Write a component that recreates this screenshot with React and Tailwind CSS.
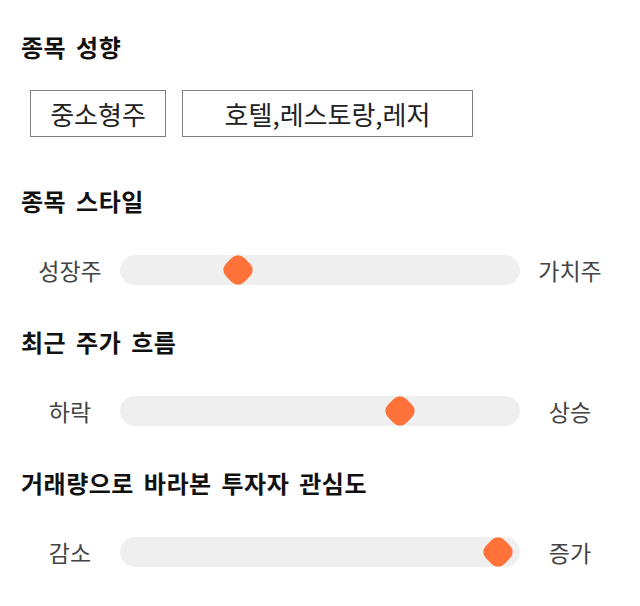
import React from "react";

const sliders = [
  { title: "종목 스타일", left: "성장주", right: "가치주", pos: "left-[118px]" },
  { title: "최근 주가 흐름", left: "하락", right: "상승", pos: "left-[280px]" },
  { title: "거래량으로 바라본 투자자 관심도", left: "감소", right: "증가", pos: "left-[378px]" },
];

function Slider({ left, right, pos }) {
  return (
    <div className="flex items-center mt-[38px] h-[30px]">
      <div className="w-[100px] text-center text-[23px] leading-[30px] text-[#444]">{left}</div>
      <div className="relative w-[400px] h-[30px] rounded-full bg-[#efefef]">
        <div className={`absolute top-[15px] ${pos} -translate-x-1/2 -translate-y-1/2`}>
          <div className="w-[26px] h-[26px] rounded-[9px] rotate-45 bg-[#ff733a]" />
        </div>
      </div>
      <div className="w-[100px] text-center text-[23px] leading-[30px] text-[#444]">{right}</div>
    </div>
  );
}

export default function App() {
  return (
    <div
      className="w-[640px] h-[606px] bg-white px-5 pt-[31px]"
      style={{ fontFamily: '"Noto Sans CJK KR", "Noto Sans", sans-serif' }}
    >
      <h2 className="text-[24px] leading-[32px] font-bold text-[#111] pl-[1px] tracking-[0.5px] [word-spacing:4px]">종목 성향</h2>
      <div className="flex gap-4 mt-[27px] pl-[10px]">
        <div className="w-[136px] h-[47px] border border-[#7f7f7f] flex items-center justify-center text-[26px] text-[#222]">
          중소형주
        </div>
        <div className="w-[291px] h-[47px] border border-[#7f7f7f] flex items-center justify-center text-[26px] text-[#222]">
          호텔,레스토랑,레저
        </div>
      </div>
      {sliders.map((s, i) => (
        <div key={i} className={i === 0 ? "mt-[48px]" : "mt-[41px]"}>
          <h2 className="text-[24px] leading-[32px] font-bold text-[#111] pl-[1px] tracking-[0.5px] [word-spacing:4px]">{s.title}</h2>
          <Slider left={s.left} right={s.right} pos={s.pos} />
        </div>
      ))}
    </div>
  );
}
